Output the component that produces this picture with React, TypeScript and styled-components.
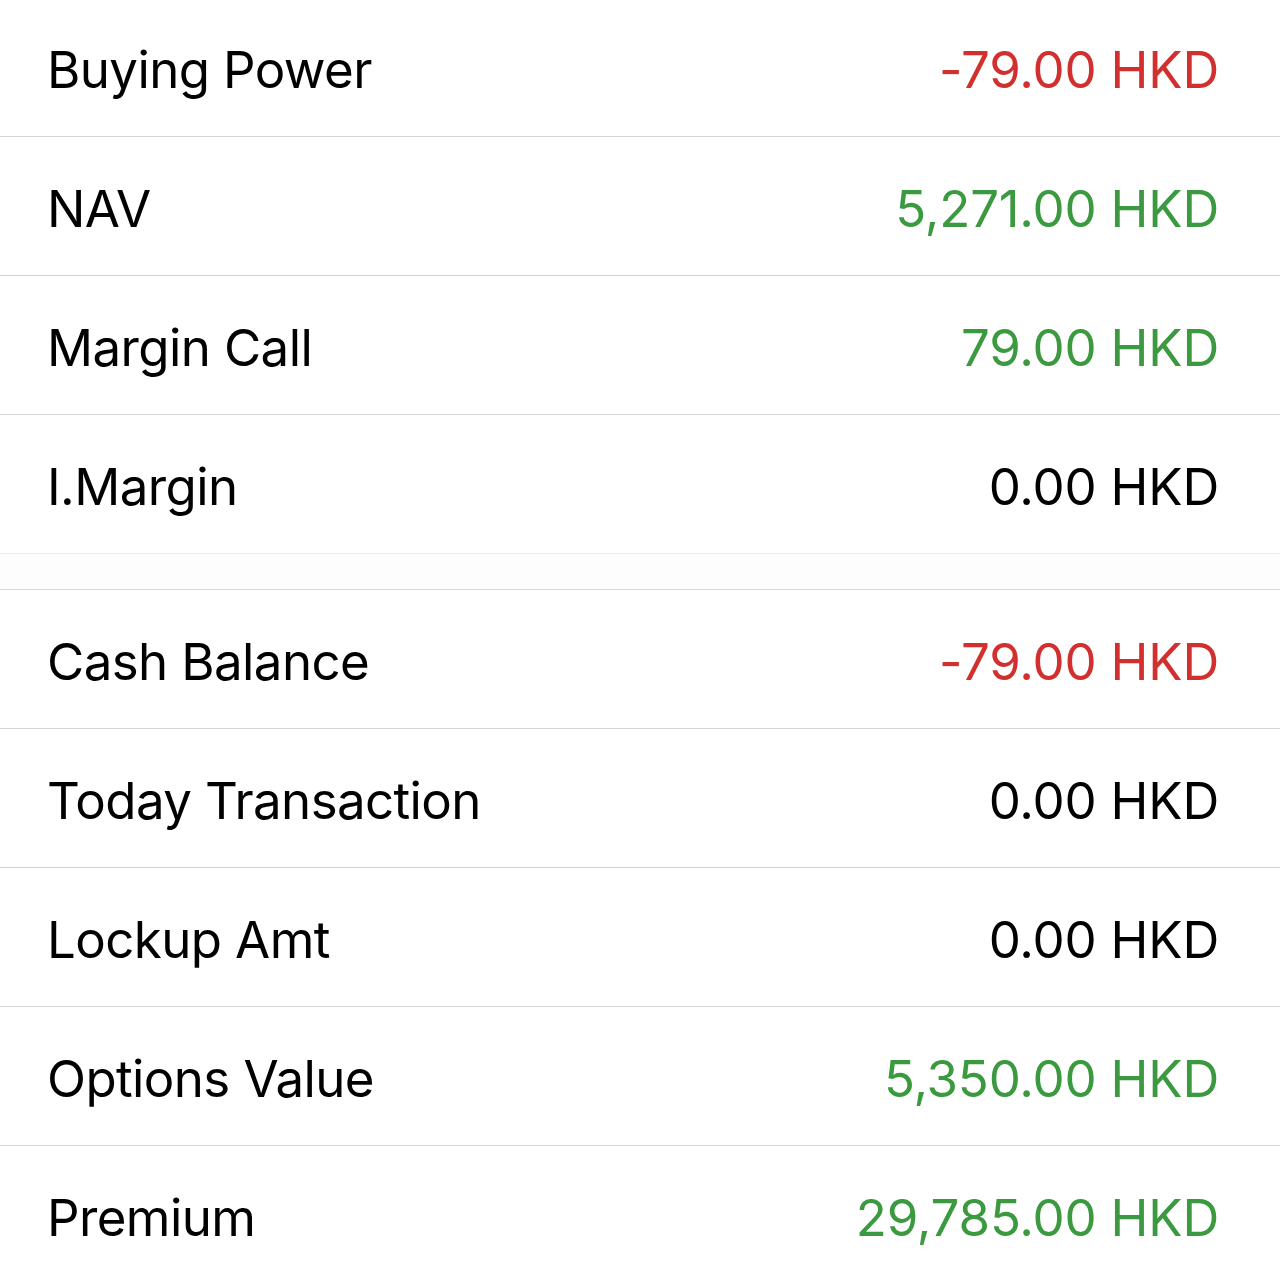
import React from "react";
import styled, { createGlobalStyle } from "styled-components";

const GlobalStyle = createGlobalStyle`
  html, body {
    margin: 0;
    padding: 0;
    background: #ffffff;
  }
  body {
    font-family: Inter, "Noto Sans", sans-serif;
    -webkit-font-smoothing: antialiased;
  }
`;

type Tone = "neg" | "pos" | "plain";

const toneColors: Record<Tone, string> = {
  neg: "#d2302e",
  pos: "#3b993f",
  plain: "#000000",
};

const Page = styled.div`
  width: 1280px;
  padding-top: 1px;
  margin-top: -3px;
  background: #ffffff;
`;

const Section = styled.section`
  display: flex;
  flex-direction: column;
  background: #ffffff;
`;

const SectionGap = styled.div`
  height: 35px;
  background: #fdfdfd;
  border-bottom: 1px solid #d8d8d8;
`;

const Row = styled.div<{ $soft?: boolean }>`
  display: flex;
  align-items: center;
  justify-content: space-between;
  box-sizing: border-box;
  height: 139px;
  padding: 4px 61px 0 47px;
  border-bottom: 1px solid ${({ $soft }) => ($soft ? "#ececec" : "#d6d6d6")};
`;

const Label = styled.span`
  font-size: 51px;
  font-weight: 400;
  color: #000000;
  letter-spacing: -0.6px;
`;

const Value = styled.span<{ $tone: Tone }>`
  font-size: 51px;
  font-weight: 400;
  color: ${({ $tone }) => toneColors[$tone]};
  letter-spacing: -0.2px;
`;

interface Item {
  label: string;
  value: string;
  tone: Tone;
}

const account: Item[] = [
  { label: "Buying Power", value: "-79.00 HKD", tone: "neg" },
  { label: "NAV", value: "5,271.00 HKD", tone: "pos" },
  { label: "Margin Call", value: "79.00 HKD", tone: "pos" },
  { label: "I.Margin", value: "0.00 HKD", tone: "plain" },
];

const cash: Item[] = [
  { label: "Cash Balance", value: "-79.00 HKD", tone: "neg" },
  { label: "Today Transaction", value: "0.00 HKD", tone: "plain" },
  { label: "Lockup Amt", value: "0.00 HKD", tone: "plain" },
  { label: "Options Value", value: "5,350.00 HKD", tone: "pos" },
  { label: "Premium", value: "29,785.00 HKD", tone: "pos" },
];

export default function App() {
  return (
    <>
      <GlobalStyle />
      <Page>
        <Section>
          {account.map((item, i) => (
            <Row key={item.label} $soft={i === account.length - 1}>
              <Label>{item.label}</Label>
              <Value $tone={item.tone}>{item.value}</Value>
            </Row>
          ))}
        </Section>
        <SectionGap />
        <Section>
          {cash.map((item) => (
            <Row key={item.label}>
              <Label>{item.label}</Label>
              <Value $tone={item.tone}>{item.value}</Value>
            </Row>
          ))}
        </Section>
      </Page>
    </>
  );
}
